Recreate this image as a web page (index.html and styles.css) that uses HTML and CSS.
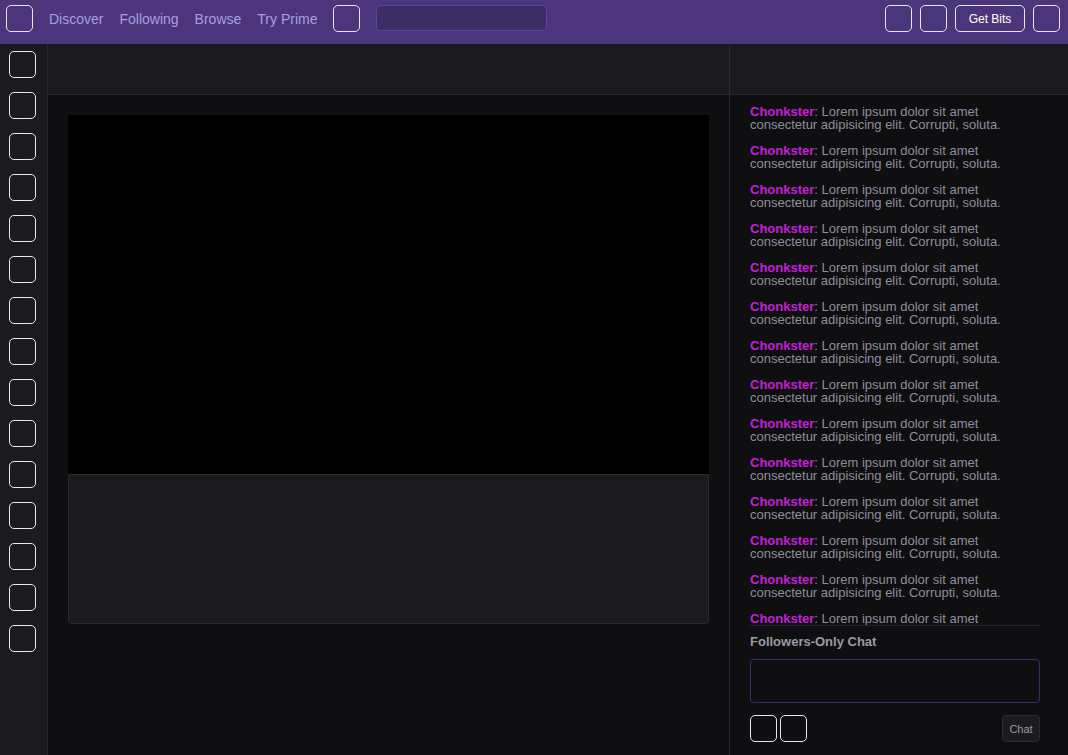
FILE: index.html
```html
<!DOCTYPE html>
<html lang="en">
<head>
<meta charset="utf-8">
<title>Stream</title>
<link rel="stylesheet" href="styles.css">
</head>
<body>
<header class="topbar">
  <div class="topbar-left">
    <span class="box"></span>
    <nav class="nav">
      <a href="#">Discover</a>
      <a href="#">Following</a>
      <a href="#">Browse</a>
      <a href="#">Try Prime</a>
    </nav>
    <span class="box"></span>
    <div class="search"></div>
  </div>
  <div class="topbar-right">
    <span class="box"></span>
    <span class="box"></span>
    <button class="bits">Get Bits</button>
    <span class="box"></span>
  </div>
</header>
<div class="layout">
  <aside class="sidebar">
    <span class="box"></span><span class="box"></span><span class="box"></span>
    <span class="box"></span><span class="box"></span><span class="box"></span>
    <span class="box"></span><span class="box"></span><span class="box"></span>
    <span class="box"></span><span class="box"></span><span class="box"></span>
    <span class="box"></span><span class="box"></span><span class="box"></span>
  </aside>
  <main class="main">
    <div class="panel-head"></div>
    <div class="main-content">
      <div class="video"></div>
      <div class="info-card"></div>
    </div>
  </main>
  <section class="chat">
    <div class="panel-head"></div>
    <div class="chat-inner">
      <div class="messages" id="messages"></div>
      <div class="chat-title">Followers-Only Chat</div>
      <div class="chat-input"></div>
      <div class="chat-actions">
        <div class="chat-icons"><span class="box"></span><span class="box"></span></div>
        <button class="chat-btn">Chat</button>
      </div>
    </div>
  </section>
</div>
<script>
  var m = document.getElementById('messages');
  for (var i = 0; i < 16; i++) {
    var p = document.createElement('p');
    p.className = 'msg';
    p.innerHTML = '<span class="user">Chonkster</span>: Lorem ipsum dolor sit amet consectetur adipisicing elit. Corrupti, soluta.';
    m.appendChild(p);
  }
</script>
</body>
</html>
```

FILE: styles.css
```css
* { box-sizing: border-box; }
html, body {
  margin: 0;
  padding: 0;
  height: 100%;
}
body {
  font-family: "Liberation Sans", Arial, sans-serif;
  background: #0f0f11;
  color: #8e8e9a;
  overflow: hidden;
}
.box {
  display: block;
  width: 27px;
  height: 27px;
  border: 1px solid #e8e8ec;
  border-radius: 5px;
  flex: none;
}
.topbar {
  height: 44px;
  background: #4b367c;
  display: flex;
  align-items: flex-start;
  justify-content: space-between;
  padding: 5px 8px 0 6px;
}
.topbar-left, .topbar-right {
  display: flex;
  align-items: center;
  height: 27px;
}
.nav {
  display: flex;
  gap: 16px;
  margin: 0 16px 0 16px;
}
.nav a {
  color: #aa9fe2;
  text-decoration: none;
  font-size: 14px;
  line-height: 16px;
}
.search {
  width: 171px;
  height: 26px;
  margin-left: 16px;
  margin-top: -1px;
  background: #3e2c64;
  border: 1px solid #5b44a2;
  border-radius: 4px;
}
.topbar-right { gap: 8px; }
.bits {
  height: 27px;
  width: 70px;
  padding: 0;
  background: transparent;
  border: 1px solid #e8e8ec;
  border-radius: 5px;
  color: #ffffff;
  font-family: "Liberation Sans", Arial, sans-serif;
  font-size: 12px;
}
.layout {
  display: flex;
  height: 711px;
}
.sidebar {
  width: 48px;
  flex: none;
  background: #1b1a1f;
  border-right: 1px solid #29282d;
  display: flex;
  flex-direction: column;
  gap: 14px;
  padding: 7px 0 0 9px;
}
.panel-head {
  height: 51px;
  background: #1b1a1f;
  border-bottom: 1px solid #29282d;
  flex: none;
}
.main {
  flex: 1;
  border-right: 1px solid #29282d;
  display: flex;
  flex-direction: column;
}
.main-content {
  padding: 20px;
}
.video {
  height: 359px;
  background: #000000;
}
.info-card {
  height: 150px;
  background: #1b1a1f;
  border: 1px solid #2b2a30;
  border-radius: 0 0 4px 4px;
}
.chat {
  width: 338px;
  flex: none;
  display: flex;
  flex-direction: column;
}
.chat-inner {
  padding: 0 28px 0 20px;
  display: flex;
  flex-direction: column;
}
.messages {
  height: 531px;
  overflow: hidden;
  padding-top: 10px;
  border-bottom: 1px solid #222126;
}
.msg {
  margin: 0 0 13px;
  font-size: 13px;
  line-height: 13px;
  color: #8e8e9a;
}
.user {
  color: #c51fd6;
  font-weight: bold;
}
.chat-title {
  margin-top: 8px;
  font-size: 13px;
  font-weight: bold;
  color: #9c9aa4;
  line-height: 15px;
}
.chat-input {
  margin-top: 10px;
  height: 44px;
  border: 1px solid #3b2a72;
  border-radius: 4px;
  background: #0f0f11;
}
.chat-actions {
  margin-top: 12px;
  display: flex;
  justify-content: space-between;
  align-items: center;
}
.chat-icons {
  display: flex;
  gap: 3px;
}
.chat-btn {
  width: 38px;
  height: 27px;
  padding: 0;
  background: #1c1b20;
  border: 1px solid #2d2c32;
  border-radius: 4px;
  color: #9a99a3;
  font-family: "Liberation Sans", Arial, sans-serif;
  font-size: 11px;
}
```
